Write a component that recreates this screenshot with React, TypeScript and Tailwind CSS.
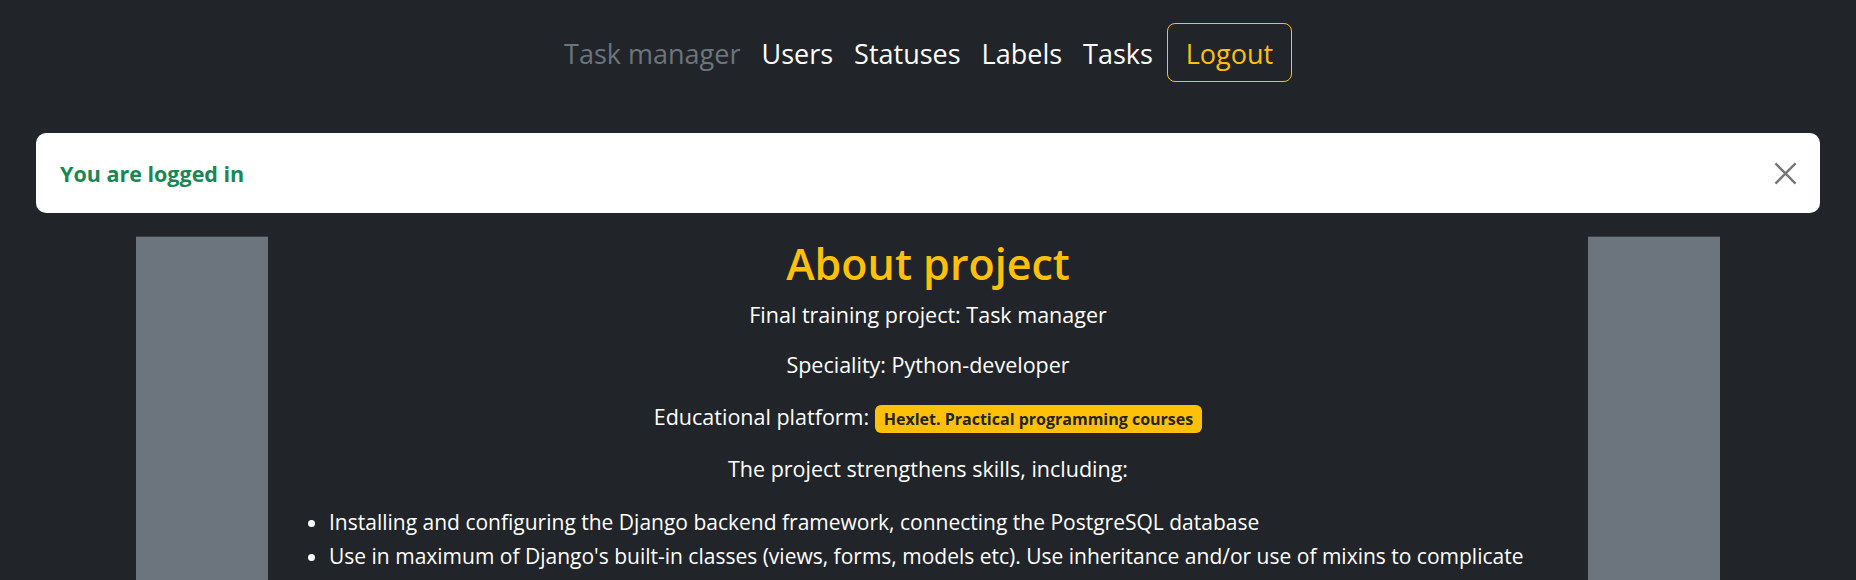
import React from "react";

const NAV = ["Users", "Statuses", "Labels", "Tasks"];

const SKILLS = [
  "Installing and configuring the Django backend framework, connecting the PostgreSQL database",
  "Use in maximum of Django's built-in classes (views, forms, models etc). Use inheritance and/or use of mixins to complicate the functionality of the classes",
  "Working with the user authentication and authorization system, sessions and flash messages",
  "Deploying the application and connecting error tracking",
];

function CloseIcon() {
  return (
    <svg viewBox="0 0 16 16" className="h-[23px] w-[23px]" fill="none" aria-hidden>
      <path d="M1 1L15 15M15 1L1 15" stroke="#757575" strokeWidth="1.6" />
    </svg>
  );
}

export default function App() {
  return (
    <div className="h-[580px] overflow-hidden bg-[#212529] font-['Open_Sans',sans-serif] text-white">
      {/* Navbar */}
      <nav className="flex h-[82px] items-end justify-center">
        <div className="flex h-[59px] items-center text-[27px]">
          <span className="mr-[21px] pt-[4px] text-[#6c757d]">Task manager</span>
          {NAV.map((n) => (
            <span key={n} className="mr-[21px] pt-[4px] text-white">
              {n}
            </span>
          ))}
          <button className="-ml-[7px] flex h-[59px] w-[125px] items-center justify-center rounded-[8px] border border-[#ffc107] pt-[4px] text-[27px] text-[#ffc107]">
            Logout
          </button>
        </div>
      </nav>

      {/* Flash message */}
      <div className="mx-[36px] mt-[51px] flex h-[80px] items-center justify-between rounded-[10px] bg-white pl-[24px] pr-[23px]">
        <span className="pt-[2px] text-[21.5px] font-bold text-[#198754]">You are logged in</span>
        <CloseIcon />
      </div>

      {/* Content */}
      <div className="mx-auto mt-[23px] flex h-[400px] w-[1584px]">
        <div className="w-[132px] shrink-0 border-t border-[#3a4047] bg-[#6c757d]" />
        <div className="flex-1 px-[15px] pt-[2px]">
          <h1 className="mb-[10px] text-center text-[43px] leading-[52px] font-semibold text-[#ffc107]">
            About project
          </h1>
          <p className="mb-[20px] text-center text-[21.5px] leading-[30px]">
            Final training project: Task manager
          </p>
          <p className="mb-[20px] text-center text-[21.5px] leading-[30px]">
            Speciality: Python-developer
          </p>
          <p className="mb-[20px] text-center text-[21.5px] leading-[34px]">
            Educational platform:{" "}
            <span className="inline-block h-[28px] rounded-[6px] bg-[#ffc107] px-[9px] align-middle text-[16px] leading-[28px] font-bold text-[#212529]">
              Hexlet. Practical programming courses
            </span>
          </p>
          <p className="mb-[21px] text-center text-[21.5px] leading-[30px]">
            The project strengthens skills, including:
          </p>
          <ul className="list-disc pl-[46px] pr-[24px] text-[21px] leading-[34px]">
            {SKILLS.map((s) => (
              <li key={s}>{s}</li>
            ))}
          </ul>
        </div>
        <div className="w-[132px] shrink-0 border-t border-[#3a4047] bg-[#6c757d]" />
      </div>
    </div>
  );
}
